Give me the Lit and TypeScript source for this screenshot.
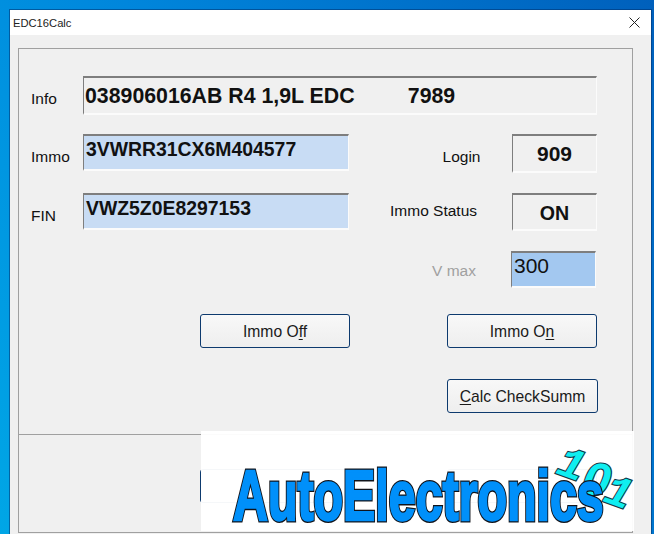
import { LitElement, html, css } from "lit";
import { customElement } from "lit/decorators.js";

@customElement("app-root")
export class AppRoot extends LitElement {
  static styles = css`
    :host {
      display: block;
      width: 654px;
      height: 534px;
      overflow: hidden;
      position: relative;
      box-sizing: border-box;
      padding: 10px 3px 0 10px;
      font-family: "Liberation Sans", Arial, sans-serif;
      color: #111;
      background: linear-gradient(60deg, #00a6e6 0%, #0086dc 45%, #0060bc 100%);
    }
    .window {
      height: 524px;
      background: #f0f0f0;
      box-shadow: 0 0 0 1px rgba(0, 50, 110, 0.55);
      display: flex;
      flex-direction: column;
      overflow: hidden;
    }
    .titlebar {
      height: 25px;
      flex: none;
      background: #fff;
      display: flex;
      align-items: center;
      justify-content: space-between;
      padding: 0 11px 0 3px;
      font-size: 11.2px;
      color: #222;
    }
    .titlebar svg { display: block; }
    .client { padding: 13px 18px 0 8px; flex: 1; min-height: 0; }
    .group {
      border: 1px solid #a0a0a0;
      height: 485px;
      box-sizing: border-box;
      display: flex;
      flex-direction: column;
    }
    .top {
      height: 386px;
      flex: none;
      border-bottom: 1px solid #a0a0a0;
      padding: 27px 35px 0 12px;
      box-sizing: border-box;
    }
    .form {
      display: grid;
      grid-template-columns: 52px 266px 1fr 85px;
      grid-template-rows: 58px 59px 58px 37px;
      align-items: start;
    }
    .lbl { font-size: 15.5px; line-height: 18px; margin-top: 14px; }
    .r { grid-column: 3; justify-self: end; }
    .lbl.login { margin: 14px 31.5px 0 0; }
    .lbl.status { margin: 9px 35px 0 0; }
    .lbl.vmax { margin: 11px 36px 0 0; color: #a0a0a0; }
    .field {
      box-sizing: border-box;
      border-top: 2px solid #7e7e7e;
      border-left: 1px solid #7e7e7e;
      border-right: 1px solid #fbfbfb;
      border-bottom: 2px solid #fbfbfb;
      font-weight: bold;
      white-space: pre;
      overflow: hidden;
    }
    .wide { grid-column: 2 / 5; height: 39px; font-size: 21.3px; line-height: 36px; padding-left: 1px; }
    .blue { height: 37px; background: #c8dcf4; font-size: 19.4px; line-height: 26px; padding-left: 2px; }
    .value { height: 39px; font-size: 21px; line-height: 36px; text-align: center; }
    .value.on { height: 38px; font-size: 19.6px; line-height: 37px; }
    .vbox {
      height: 37px;
      width: 85px;
      margin-left: -1px;
      background: #a3c8f0;
      font-weight: normal;
      font-size: 21px;
      line-height: 25px;
      padding-left: 2px;
      color: #111;
    }
    .buttons {
      display: grid;
      grid-template-columns: 150px 150px;
      column-gap: 97px;
      row-gap: 31px;
      margin: 26px 0 0 169px;
    }
    button {
      width: 150px;
      height: 34px;
      padding: 1px 0 0;
      box-sizing: border-box;
      border: 1px solid #0d3a6e;
      border-radius: 3px;
      background: linear-gradient(#f8f8f8, #eeeeee);
      font: 15.7px "Liberation Sans", Arial, sans-serif;
      color: #1a1a1a;
    }
    button.calc { grid-column: 2; width: 151px; }
    .bottom { flex: 1; padding: 34px 0 0 181px; }
    .bottom .buttons { margin: 0; }
    u { text-underline-offset: 2px; }
    .mark {
      position: absolute;
      left: 201px;
      top: 431px;
      width: 433px;
      height: 100px;
      background: rgba(255, 255, 255, 0.96);
    }
    .logo {
      position: absolute;
      left: 32px;
      top: 34px;
      font: bold 71px/62px "Liberation Sans", Arial, sans-serif;
      color: #0090fa;
      -webkit-text-stroke: 5px #10131a;
      white-space: nowrap;
      transform-origin: 0 0;
      transform: scaleX(0.681);
    }
    .logo::after {
      content: attr(data-text);
      position: absolute;
      left: 0;
      top: 0;
      -webkit-text-stroke: 2.4px #0090fa;
    }
    .digit {
      position: absolute;
      font: italic bold 44px/44px "Liberation Mono", monospace;
      color: #10eef0;
      -webkit-text-stroke: 2.2px #123a48;
      paint-order: stroke fill;
    }
    .d1 { left: 357px; top: 13px; transform: rotate(20deg); }
    .d2 {
      left: 383px;
      top: 26px;
      font-family: "Liberation Sans", Arial, sans-serif;
      font-size: 46px;
      transform: rotate(10deg) scaleX(1.05);
    }
    .d3 { left: 404px; top: 41px; transform: rotate(20deg); }
  `;

  render() {
    return html`
      <div class="window">
        <div class="titlebar">
          <span>EDC16Calc</span>
          <svg width="11" height="11" viewBox="0 0 11 11"><path d="M0.5 0.5L10.5 10.5M10.5 0.5L0.5 10.5" stroke="#222" stroke-width="1" fill="none"/></svg>
        </div>
        <div class="client">
          <div class="group">
            <div class="top">
              <div class="form">
                <span class="lbl">Info</span>
                <div class="field wide">038906016AB R4 1,9L EDC         7989</div>

                <span class="lbl">Immo</span>
                <div class="field blue">3VWRR31CX6M404577</div>
                <span class="lbl r login">Login</span>
                <div class="field value">909</div>

                <span class="lbl">FIN</span>
                <div class="field blue">VWZ5Z0E8297153</div>
                <span class="lbl r status">Immo Status</span>
                <div class="field value on">ON</div>

                <span></span><span></span>
                <span class="lbl r vmax">V max</span>
                <div class="field vbox">300</div>
              </div>
              <div class="buttons">
                <button>Immo O<u>f</u>f</button>
                <button>Immo O<u>n</u></button>
                <button class="calc"><u>C</u>alc CheckSumm</button>
              </div>
            </div>
            <div class="bottom">
              <div class="buttons">
                <button></button>
                <button></button>
              </div>
            </div>
          </div>
        </div>
      </div>
      <div class="mark">
        <span class="digit d1">1</span>
        <span class="digit d2">0</span>
        <span class="digit d3">1</span>
        <span class="logo" data-text="AutoElectronics">AutoElectronics</span>
      </div>
    `;
  }
}
